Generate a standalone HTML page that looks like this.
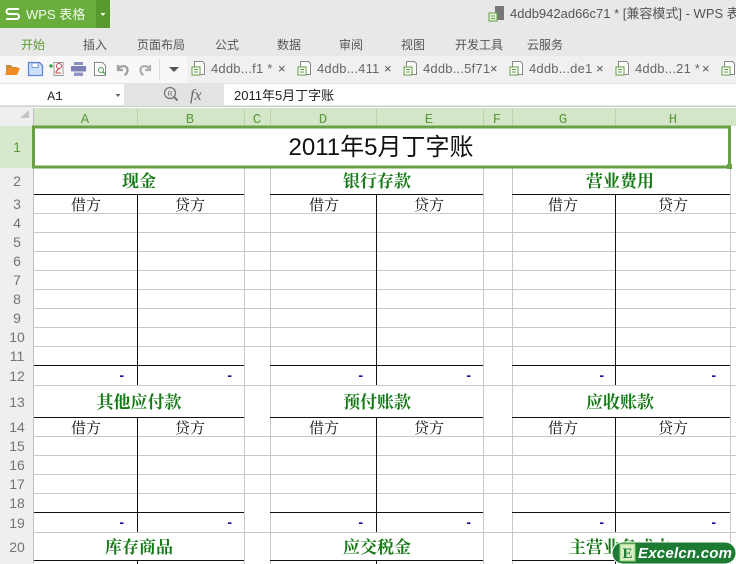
<!DOCTYPE html>
<html><head><meta charset="utf-8">
<style>
html,body{margin:0;padding:0;background:#fff}
body{width:736px;height:564px;overflow:hidden;position:relative}
svg{position:absolute;left:0;top:0;display:block}
.s{font-family:"Liberation Sans","Noto Sans CJK SC",sans-serif}
.c{font-family:"Liberation Mono",monospace}
.h{font-family:"Liberation Mono",monospace;font-size:14px;fill:#5b9a3c;text-anchor:middle}
.r{font-family:"Liberation Sans",sans-serif;font-size:14px;fill:#747474;text-anchor:middle}
.t{font-family:"Noto Serif CJK SC",serif;font-size:17px;font-weight:700;fill:#157a15;text-anchor:middle}
.b{font-family:"Noto Serif CJK SC",serif;font-size:15px;fill:#111;text-anchor:middle}
.d{font-family:"Liberation Sans",sans-serif;font-size:14px;font-weight:700;fill:#12129a;text-anchor:end}
.n{font-family:"Liberation Sans","Noto Sans CJK SC",sans-serif;font-size:12px;fill:#555;text-anchor:middle}
.f{font-family:"Liberation Sans",sans-serif;font-size:13px;letter-spacing:.2px;fill:#666}
.x{font-family:"Liberation Sans",sans-serif;font-size:13px;fill:#555}
</style></head><body>
<svg width="736" height="564" viewBox="0 0 736 564">
<defs>
<g id="doc"><path d="M2.500 .5h8l2 2v11h-10z" fill="#fafafa" stroke="#888"/><rect x="0" y="6" width="8" height="8" fill="#fff" stroke="#5f9f3f"/><path d="M2 8.500h4M2 11h4" stroke="#5f9f3f"/></g>
</defs>
<!-- chrome -->
<rect width="736" height="56" fill="#e8e8e8"/>
<rect y="56" width="736" height="28" fill="#f0f0f0"/>
<rect y="56" width="187" height="27" fill="#f8f8f8"/>
<rect y="83" width="736" height="24" fill="#e3e3e3"/>
<rect y="84" width="124" height="21" fill="#fff"/>
<rect x="224" y="84" width="512" height="21" fill="#fff"/>
<!-- WPS button -->
<rect width="96" height="28" fill="#69ad3c"/>
<rect x="96" width="14" height="28" fill="#57982f"/>
<path d="M19 9H9a2.500 2.500 0 0 0 0 5h7.500a2.500 2.500 0 0 1 0 5H6" fill="none" stroke="#fff" stroke-width="2"/>
<text x="26" y="19" class="s" font-size="13" fill="#f4fbee">WPS 表格</text>
<path d="M100.500 13h5l-2.500 3z" fill="#fff"/>
<!-- title -->
<g transform="translate(489,6)"><rect x="6" y="0" width="9" height="14" fill="#777"/><rect x="0" y="7" width="8" height="8" fill="#e8f3e0" stroke="#5f9f3f"/><path d="M2 10h4M2 12.500h4" stroke="#5f9f3f"/></g>
<text x="510" y="18" class="s" font-size="13" fill="#555">4ddb942ad66c71 * [兼容模式] - WPS 表</text>
<!-- menu -->
<text x="33" y="49" class="n" style="fill:#5e9a33">开始</text>
<text x="95" y="49" class="n">插入</text>
<text x="161" y="49" class="n">页面布局</text>
<text x="227" y="49" class="n">公式</text>
<text x="289" y="49" class="n">数据</text>
<text x="351" y="49" class="n">审阅</text>
<text x="413" y="49" class="n">视图</text>
<text x="479" y="49" class="n">开发工具</text>
<text x="545" y="49" class="n">云服务</text>
<!-- toolbar icons -->
<path d="M6 65h5l1.500 2h5v2H9l-3 5z" fill="#c98a3a"/><path d="M8 68h12l-3 7H5z" fill="#f28c22"/>
<path d="M28.500 62.500h11l3 3v10h-14z" fill="#cfe0fa" stroke="#5f86d8" stroke-width="1.300"/><rect x="32" y="63" width="6" height="4.500" fill="#fff" stroke="#5f86d8" stroke-width=".8"/>
<path d="M54 62.500h9v13h-9z" fill="#fff" stroke="#999"/><path d="M49 66h4M51 64v4" stroke="#3f9f4f" stroke-width="1.500"/><circle cx="59" cy="66" r="2.500" fill="none" stroke="#c84040"/><path d="M59 68.500l-3 3v1.500h5" fill="none" stroke="#c84040"/>
<rect x="74" y="62" width="9" height="3" fill="#8a8fc0"/><rect x="71" y="66" width="15" height="5.500" fill="#7b80b8"/><rect x="74" y="72.500" width="9" height="3.500" fill="#8f93c4"/>
<path d="M94.500 62.500h8l3 3v10h-11z" fill="#fff" stroke="#888"/><circle cx="101" cy="70" r="2.500" fill="none" stroke="#4f9f4f"/><path d="M103 72l2 2" stroke="#4f9f4f" stroke-width="1.500"/>
<path d="M118 65v5h5M118.500 69c2-4 9-4 9 1 0 2-1 4-3 5" fill="none" stroke="#a0a0a0" stroke-width="2.300"/>
<path d="M150 65v5h-5M149.500 69c-2-4-9-4-9 1 0 2 1 4 3 5" fill="none" stroke="#aeaeae" stroke-width="2.300"/>
<line x1="159.500" y1="58" x2="159.500" y2="80" stroke="#ddd"/>
<path d="M169 67h10l-5 5z" fill="#555"/>
<!-- tabs -->
<use href="#doc" x="192" y="61"/><text x="211" y="73" class="f">4ddb...f1 *</text><text x="278" y="73" class="x">×</text>
<use href="#doc" x="298" y="61"/><text x="317" y="73" class="f">4ddb...411</text><text x="384" y="73" class="x">×</text>
<use href="#doc" x="404" y="61"/><text x="423" y="73" class="f">4ddb...5f71</text><text x="490" y="73" class="x">×</text>
<use href="#doc" x="510" y="61"/><text x="529" y="73" class="f">4ddb...de1</text><text x="596" y="73" class="x">×</text>
<use href="#doc" x="616" y="61"/><text x="635" y="73" class="f">4ddb...21 *</text><text x="702" y="73" class="x">×</text>
<use href="#doc" x="722" y="61"/>
<!-- name / formula bar -->
<text x="55" y="100" class="c" font-size="13" fill="#222" style="text-anchor:middle">A1</text>
<path d="M115.500 94h5l-2.500 3z" fill="#666"/>
<circle cx="170" cy="93" r="5.500" fill="none" stroke="#777" stroke-width="1.300"/><path d="M174 97l3.500 3.500" stroke="#777" stroke-width="2"/><text x="170" y="96" font-family="Liberation Sans" font-size="7" fill="#777" text-anchor="middle">R</text>
<text x="190" y="100" font-family="Liberation Serif" font-style="italic" font-size="16" fill="#666">fx</text>
<text x="234" y="100" class="s" font-size="13" fill="#222">2011年5月丁字账</text>
<!-- sheet header backgrounds -->
<rect y="107" width="33" height="457" fill="#efefef"/>
<rect x="34" y="108" width="702" height="18" fill="#d3e6c8"/>
<rect y="126" width="33" height="42" fill="#d7e8cc"/>
<path d="M29 110v8h-9z" fill="#c4c4c4"/>
<rect y="106" width="736" height="1" fill="#cfcfcf"/>
<rect x="33" y="108" width="1" height="456" fill="#c0c0c0"/>
<g stroke="#bcd4ae"><path d="M137.500 108v18M244.500 108v18M270.500 108v18M376.500 108v18M483.500 108v18M512.500 108v18M615.500 108v18"/></g>
<!-- column letters -->
<text x="85" y="123" class="h">A</text><text x="190" y="123" class="h">B</text><text x="257" y="123" class="h">C</text><text x="323" y="123" class="h">D</text><text x="429" y="123" class="h">E</text><text x="497" y="123" class="h">F</text><text x="563" y="123" class="h">G</text><text x="673" y="123" class="h">H</text>
<!-- row numbers -->
<text x="17" y="152" class="r" style="fill:#5b9a3c">1</text><text x="17" y="186" class="r">2</text><text x="17" y="209" class="r">3</text><text x="17" y="228" class="r">4</text><text x="17" y="247" class="r">5</text><text x="17" y="266" class="r">6</text><text x="17" y="285" class="r">7</text><text x="17" y="304" class="r">8</text><text x="17" y="323" class="r">9</text><text x="17" y="342" class="r">10</text><text x="17" y="361" class="r">11</text><text x="17" y="381" class="r">12</text><text x="17" y="407" class="r">13</text><text x="17" y="432" class="r">14</text><text x="17" y="451" class="r">15</text><text x="17" y="470" class="r">16</text><text x="17" y="489" class="r">17</text><text x="17" y="508" class="r">18</text><text x="17" y="528" class="r">19</text><text x="17" y="552" class="r">20</text>
<!-- gray grid -->
<g stroke="#c8c8c8" fill="none">
<path d="M244.500 168v396M270.500 168v396M483.500 168v396M512.500 168v396M730.500 168v396"/>
<path d="M34 213.500h702M34 232.500h702M34 251.500h702M34 270.500h702M34 289.500h702M34 308.500h702M34 327.500h702M34 346.500h702M34 385.500h702M34 436.500h702M34 455.500h702M34 474.500h702M34 493.500h702M34 532.500h702"/>
</g>
<!-- black lines -->
<g stroke="#111" fill="none">
<path d="M34 194.500h210M270 194.500h213M512 194.500h218M34 365.500h210M270 365.500h213M512 365.500h218M34 417.500h210M270 417.500h213M512 417.500h218M34 512.500h210M270 512.500h213M512 512.500h218M34 560.500h210M270 560.500h213M512 560.500h218"/>
<path d="M137.500 194v191M376.500 194v191M615.500 194v191M137.500 417v115M376.500 417v115M615.500 417v115M137.500 560v4M376.500 560v4M615.500 560v4"/>
</g>
<!-- selection -->
<rect x="33.500" y="127" width="696" height="40" fill="#fff" stroke="#69a045" stroke-width="3"/>
<rect x="727" y="164" width="5" height="5" fill="#69a045"/>
<text x="381" y="155" class="s" font-size="24" fill="#111" text-anchor="middle">2011年5月丁字账</text>
<!-- titles -->
<text x="139" y="187" class="t">现金</text><text x="377" y="187" class="t">银行存款</text><text x="620" y="187" class="t">营业费用</text>
<text x="139" y="408" class="t">其他应付款</text><text x="377" y="408" class="t">预付账款</text><text x="620" y="408" class="t">应收账款</text>
<text x="139" y="553" class="t">库存商品</text><text x="377" y="553" class="t">应交税金</text><text x="620" y="553" class="t">主营业务成本</text>
<!-- debit / credit -->
<text x="86" y="210" class="b">借方</text><text x="190" y="210" class="b">贷方</text><text x="324" y="210" class="b">借方</text><text x="429" y="210" class="b">贷方</text><text x="563" y="210" class="b">借方</text><text x="673" y="210" class="b">贷方</text>
<text x="86" y="433" class="b">借方</text><text x="190" y="433" class="b">贷方</text><text x="324" y="433" class="b">借方</text><text x="429" y="433" class="b">贷方</text><text x="563" y="433" class="b">借方</text><text x="673" y="433" class="b">贷方</text>
<!-- dashes -->
<text x="124" y="380" class="d">-</text><text x="232" y="380" class="d">-</text><text x="363" y="380" class="d">-</text><text x="471" y="380" class="d">-</text><text x="604" y="380" class="d">-</text><text x="716" y="380" class="d">-</text>
<text x="124" y="527" class="d">-</text><text x="232" y="527" class="d">-</text><text x="363" y="527" class="d">-</text><text x="471" y="527" class="d">-</text><text x="604" y="527" class="d">-</text><text x="716" y="527" class="d">-</text>
<!-- watermark -->
<rect x="612" y="542" width="124" height="22" rx="11" fill="#1c7a33" stroke="#fff"/>
<rect x="620" y="544" width="15" height="17" fill="#d8efc4" stroke="#8fcf6f"/>
<text x="627.500" y="558" font-family="Liberation Serif" font-weight="700" font-size="15" fill="#1c7a33" text-anchor="middle">E</text>
<text x="638" y="558" font-family="Liberation Sans" font-weight="700" font-style="italic" font-size="15" fill="#fff" textLength="94">Excelcn.com</text>
</svg>
</body></html>
